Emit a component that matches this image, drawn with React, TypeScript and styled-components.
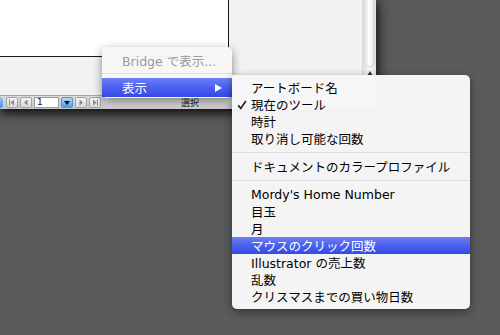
import React, { ReactElement } from 'react';
import styled, { createGlobalStyle } from 'styled-components';

const GlobalStyle = createGlobalStyle`
  html, body {
    margin: 0;
    padding: 0;
    background: #5b5b5b;
    overflow: hidden;
  }
`;

const Screen = styled.div`
  width: 500px;
  height: 335px;
  position: relative; /* menus float over the window */
  background: #5b5b5b;
  font-family: 'DejaVu Sans', 'Noto Sans CJK JP', sans-serif;
  overflow: hidden;
`;

const Window = styled.div`
  width: 376px;
  display: flex;
  flex-direction: column;
  box-shadow: 0 4px 10px rgba(0, 0, 0, 0.8), 3px 0 12px rgba(0, 0, 0, 0.35);
`;

const Content = styled.div`
  height: 95px;
  display: flex;
  flex-direction: row;
`;

const Canvas = styled.div`
  flex: 1;
  background: #f2f2f2;
`;

const Artboard = styled.div`
  width: 228px;
  height: 56px;
  background: #ffffff;
  border-right: 1px solid #1a1a1a;
  border-bottom: 1px solid #1a1a1a;
`;

const Scrollbar = styled.div`
  width: 14px;
  display: flex;
  flex-direction: column;
  align-items: center;
  background: linear-gradient(90deg, #e2e2e2, #f7f7f7 50%, #e6e6e6);
  border-left: 1px solid #d6d6d6;
  box-sizing: border-box;
`;

const Thumb = styled.div`
  width: 11px;
  height: 66px;
  border-radius: 0 0 6px 6px;
  background: linear-gradient(90deg, #d8d8d8, #ffffff 45%, #f4f4f4 70%, #cfcfcf);
  box-shadow: 0 1px 1px rgba(0, 0, 0, 0.15);
`;

const ArrowUp = styled.div`
  margin-top: 5px;
  width: 0;
  height: 0;
  border-left: 3px solid transparent;
  border-right: 3px solid transparent;
  border-bottom: 5px solid #333;
`;

const StatusBar = styled.div`
  height: 14px;
  display: flex;
  flex-direction: row;
  align-items: center;
  gap: 2px;
  background: linear-gradient(#dcdcdc, #c6c6c6);
  border-top: 1px solid #a6a6a6;
  box-sizing: border-box;
`;

const BlueStub = styled.div`
  width: 3px;
  height: 11px;
  background: linear-gradient(#9cc9f5, #3f8fe6);
  border-radius: 0 3px 3px 0;
  margin-right: 1px;
`;

const NavButton = styled.div<{ $blue?: boolean }>`
  width: 12px;
  height: 11px;
  display: flex;
  align-items: center;
  justify-content: center;
  box-sizing: border-box;
  border: 1px solid ${(p) => (p.$blue ? '#5a8fd0' : '#a2a2a2')};
  border-radius: 2px;
  background: ${(p) =>
    p.$blue ? 'linear-gradient(#b5dafc, #4d9cec)' : 'linear-gradient(#f6f6f6, #d9d9d9)'};
`;

const PageInput = styled.div`
  width: 25px;
  height: 11px;
  box-sizing: border-box;
  border: 1px solid #9c9c9c;
  background: #ffffff;
  font-size: 9px;
  line-height: 9px;
  padding-left: 2px;
  color: #111;
`;

const StatusField = styled.div`
  width: 170px;
  height: 12px;
  margin-left: 2px;
  text-align: center;
  font-size: 9px;
  line-height: 12px;
  color: #222;
  background: linear-gradient(#e2e2e2, #cdcdcd);
`;

const Menu = styled.div<{ $left: number; $top: number; $width: number }>`
  position: absolute;
  left: ${(p) => p.$left}px;
  top: ${(p) => p.$top}px;
  width: ${(p) => p.$width}px;
  background: rgba(247, 247, 247, 0.98);
  box-shadow: 0 3px 10px rgba(0, 0, 0, 0.45);
  font-size: 12.5px;
  color: #000;
`;

const ContextMenu = styled(Menu)`
  border-radius: 5px;
  padding: 4px 0 1px;
`;

const SubMenu = styled(Menu)`
  border-radius: 0 5px 5px 5px;
  padding: 4px 0;
`;

const Item = styled.div<{ $active?: boolean; $disabled?: boolean; $indent: number; $h: number }>`
  height: ${(p) => p.$h}px;
  display: flex;
  flex-direction: row;
  align-items: center;
  padding-left: ${(p) => p.$indent}px;
  white-space: nowrap;
  color: ${(p) => (p.$active ? '#ffffff' : p.$disabled ? '#9a9a9a' : '#000')};
  background: ${(p) =>
    p.$active ? 'linear-gradient(#6c80f6, #4c60ef 50%, #3549e6)' : 'transparent'};
`;

const CheckSlot = styled.div`
  width: 14px;
  display: flex;
  align-items: center;
`;

const Label = styled.span`
  flex: 1;
`;

const SubArrow = styled.div`
  width: 0;
  height: 0;
  margin-right: 10px;
  border-top: 4.5px solid transparent;
  border-bottom: 4.5px solid transparent;
  border-left: 7px solid #ffffff;
`;

const Separator = styled.div<{ $h: number }>`
  height: ${(p) => p.$h}px;
  display: flex;
  align-items: center;

  &::after {
    content: '';
    flex: 1;
    height: 1px;
    background: #dcdcdc;
  }
`;

const NavIcon = ({ kind }: { kind: 'first' | 'prev' | 'next' | 'last' | 'down' }): ReactElement => {
  const c = kind === 'down' ? '#111' : '#8a8a8a';
  return (
    <svg width="8" height="7" viewBox="0 0 8 7">
      {kind === 'first' && (
        <>
          <rect x="1" y="0.5" width="1" height="6" fill={c} />
          <polygon points="6,0.5 6,6.5 2.5,3.5" fill={c} />
        </>
      )}
      {kind === 'prev' && <polygon points="5.5,0.5 5.5,6.5 2,3.5" fill={c} />}
      {kind === 'next' && <polygon points="2.5,0.5 2.5,6.5 6,3.5" fill={c} />}
      {kind === 'last' && (
        <>
          <polygon points="2,0.5 2,6.5 5.5,3.5" fill={c} />
          <rect x="6" y="0.5" width="1" height="6" fill={c} />
        </>
      )}
      {kind === 'down' && <polygon points="1,2 7,2 4,6" fill={c} />}
    </svg>
  );
};

const Check = (): ReactElement => (
  <svg width="10" height="10" viewBox="0 0 10 10">
    <path d="M1.2 5.4 L3.8 8.4 L8.8 1" fill="none" stroke="#222" strokeWidth="1.7" />
  </svg>
);

type Entry = { label: string; checked?: boolean; active?: boolean } | 'sep';

const subEntries: Entry[] = [
  { label: 'アートボード名' },
  { label: '現在のツール', checked: true },
  { label: '時計' },
  { label: '取り消し可能な回数' },
  'sep',
  { label: 'ドキュメントのカラープロファイル' },
  'sep',
  { label: "Mordy's Home Number" },
  { label: '目玉' },
  { label: '月' },
  { label: 'マウスのクリック回数', active: true },
  { label: 'Illustrator の売上数' },
  { label: '乱数' },
  { label: 'クリスマスまでの買い物日数' },
];

const App = (): ReactElement => {
  return (
    <Screen>
      <GlobalStyle />
      <Window>
        <Content>
          <Canvas>
            <Artboard />
          </Canvas>
          <Scrollbar>
            <Thumb />
            <ArrowUp />
          </Scrollbar>
        </Content>
        <StatusBar>
          <BlueStub />
          <NavButton>
            <NavIcon kind="first" />
          </NavButton>
          <NavButton>
            <NavIcon kind="prev" />
          </NavButton>
          <PageInput>1</PageInput>
          <NavButton $blue>
            <NavIcon kind="down" />
          </NavButton>
          <NavButton>
            <NavIcon kind="next" />
          </NavButton>
          <NavButton>
            <NavIcon kind="last" />
          </NavButton>
          <StatusField>選択</StatusField>
        </StatusBar>
      </Window>

      <ContextMenu $left={102} $top={47} $width={130}>
        <Item $indent={20} $h={18} $disabled>
          <Label>Bridge で表示...</Label>
        </Item>
        <Separator $h={9} />
        <Item $indent={20} $h={19} $active>
          <Label>表示</Label>
          <SubArrow />
        </Item>
      </ContextMenu>

      <SubMenu $left={232} $top={75} $width={238}>
        {subEntries.map((e, i) =>
          e === 'sep' ? (
            <Separator key={i} $h={11} />
          ) : (
            <Item key={i} $indent={5} $h={17} $active={e.active}>
              <CheckSlot>{e.checked && <Check />}</CheckSlot>
              <Label>{e.label}</Label>
            </Item>
          )
        )}
      </SubMenu>
    </Screen>
  );
};

export default App;
